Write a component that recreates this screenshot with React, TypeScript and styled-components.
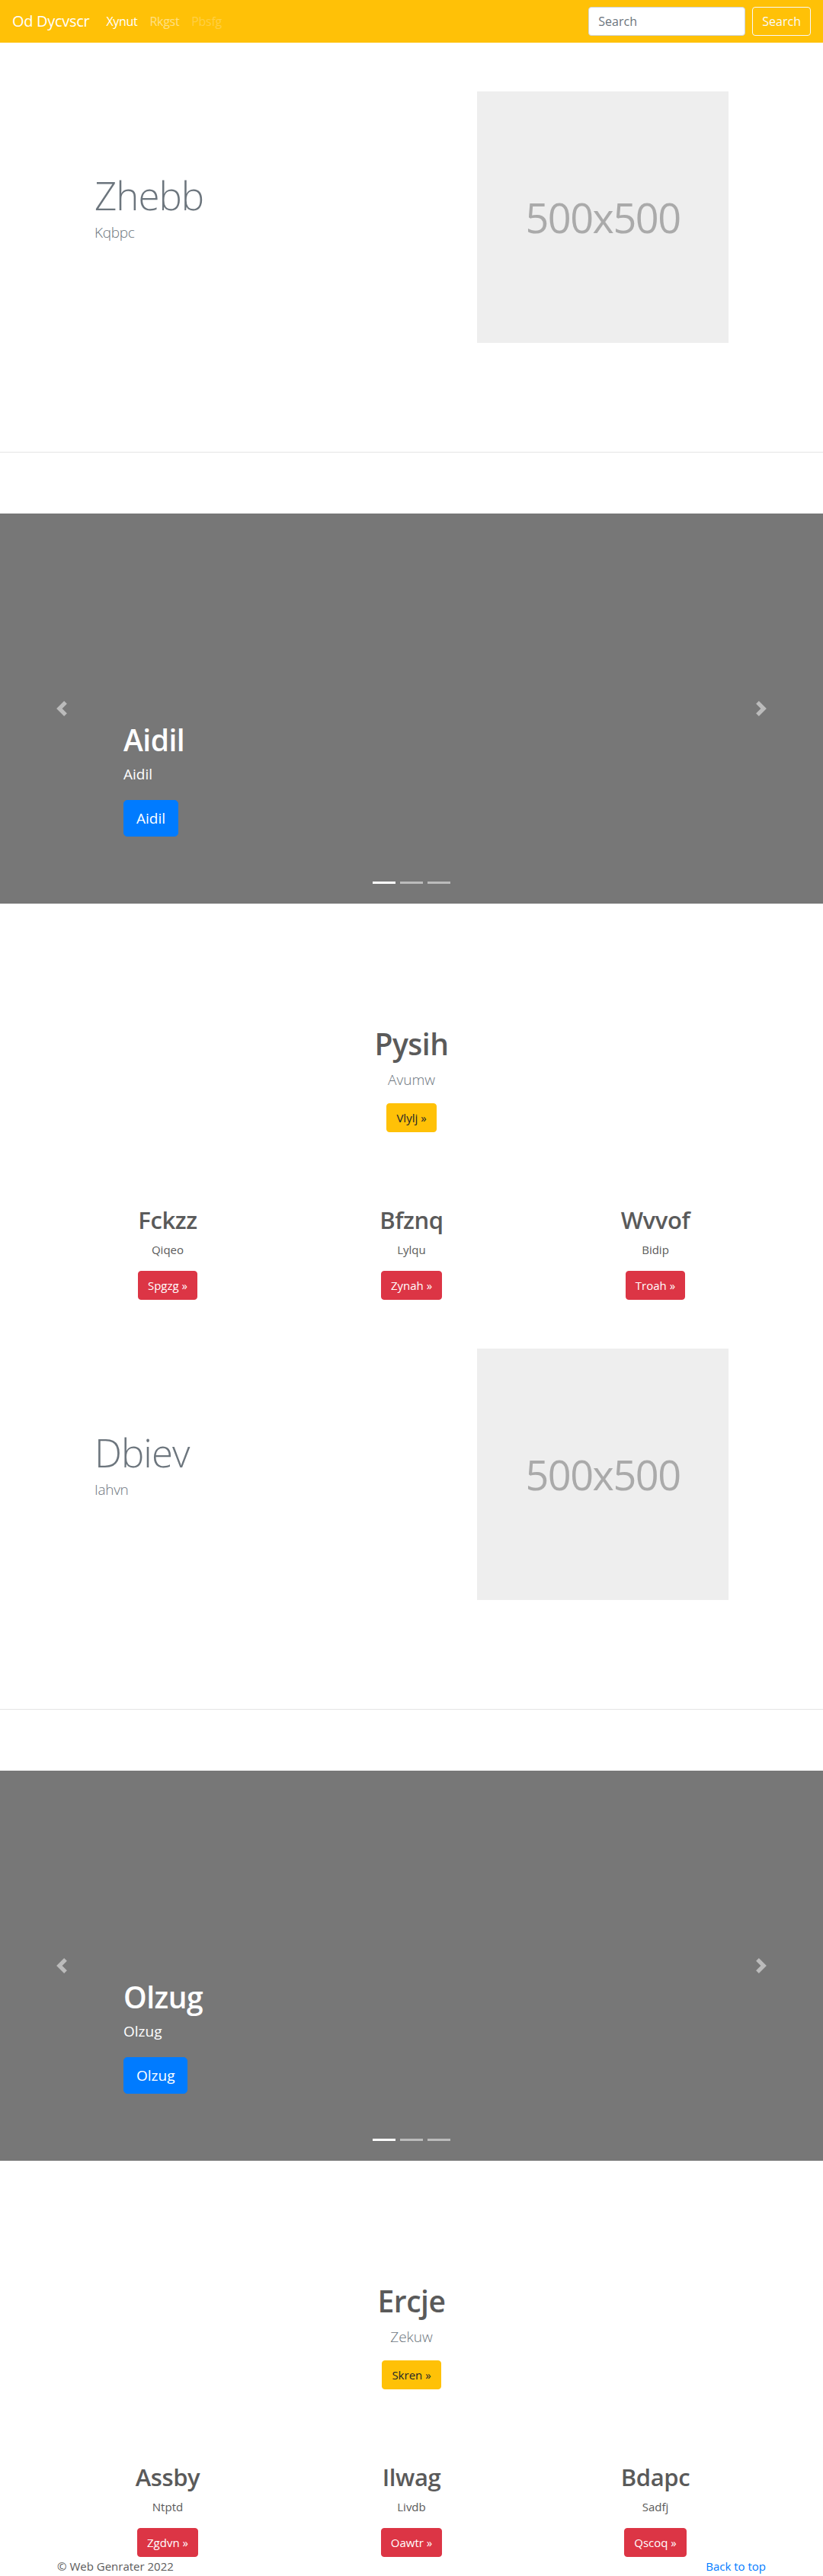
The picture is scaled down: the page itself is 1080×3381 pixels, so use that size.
import React from "react";
import styled, { createGlobalStyle } from "styled-components";

const GlobalStyle = createGlobalStyle`
  * { box-sizing: border-box; }
  html, body { margin: 0; padding: 0; }
  body {
    font-family: "Open Sans", "Liberation Sans", Arial, sans-serif;
    color: #5a5a5a;
    background: #fff;
    font-size: 16px;
    line-height: 1.5;
  }
`;

const Navbar = styled.header`
  display: flex;
  align-items: center;
  height: 56px;
  padding: 0 16px;
  background: #ffc107;
`;

const Brand = styled.a`
  font-size: 20px;
  line-height: 30px;
  color: #fff;
  margin-right: 14px;
  text-decoration: none;
  letter-spacing: -0.3px;
`;

const NavList = styled.nav`
  display: flex;
  align-items: center;
`;

type LinkState = "active" | "normal" | "disabled";

const NavLink = styled.a<{ $state: LinkState }>`
  padding: 8px;
  font-size: 16px;
  line-height: 24px;
  text-decoration: none;
  letter-spacing: -0.3px;
  color: ${(p) =>
    p.$state === "active"
      ? "#fff"
      : p.$state === "normal"
      ? "rgba(255,255,255,.5)"
      : "rgba(255,255,255,.25)"};
`;

const SearchForm = styled.form`
  margin-left: auto;
  display: flex;
  align-items: center;
  gap: 9px;
`;

const SearchInput = styled.input`
  width: 206px;
  height: 38px;
  padding: 6px 12px;
  font-family: inherit;
  font-size: 16px;
  color: #495057;
  background: #fff;
  border: 1px solid #ced4da;
  border-radius: 4px;
  outline: none;
  &::placeholder { color: #6c757d; }
`;

const OutlineButton = styled.button`
  height: 38px;
  padding: 6px 12px;
  font-family: inherit;
  font-size: 16px;
  line-height: 24px;
  color: #f8f9fa;
  background: transparent;
  border: 1px solid #f8f9fa;
  border-radius: 4px;
`;

const HeroSection = styled.section`
  padding: 64px 0 143px;
`;

const HeroGrid = styled.div`
  width: 960px;
  margin: 0 auto;
  padding: 0 64px;
  display: grid;
  grid-template-columns: 1fr 1fr;
  align-items: center;
`;

const HeroText = styled.div`
  padding-bottom: 4px;
`;

const HeroTitle = styled.h1`
  margin: 0;
  font-size: 51px;
  font-weight: 300;
  line-height: 64px;
  letter-spacing: -1px;
  color: #6c757d;
`;

const HeroLead = styled.p`
  margin: 2px 0 22px;
  font-size: 19px;
  font-weight: 300;
  line-height: 30px;
  letter-spacing: -0.3px;
  color: #6c757d;
`;

const Placeholder = styled.div`
  justify-self: end;
  width: 330px;
  height: 330px;
  background: #eee;
  color: #aaa;
  display: flex;
  align-items: center;
  justify-content: center;
  font-size: 54px;
  letter-spacing: -1.5px;
`;

const Divider = styled.hr`
  margin: 0;
  border: 0;
  border-top: 1px solid #e5e5e5;
`;

const Carousel = styled.div`
  position: relative;
  margin-top: 80px;
  height: 512px;
  background: #777;
  overflow: hidden;
`;

const Control = styled.span<{ $side: "left" | "right" }>`
  position: absolute;
  top: 0;
  bottom: 0;
  ${(p) => (p.$side === "left" ? "left: 0;" : "right: 0;")}
  width: 15%;
  display: flex;
  align-items: center;
  justify-content: center;
  opacity: 0.5;
`;

const Caption = styled.div`
  position: absolute;
  left: 15%;
  right: 15%;
  bottom: 48px;
  padding: 20px 0;
  color: #fff;
  text-align: left;
`;

const CaptionTitle = styled.h1`
  margin: 0 0 8px;
  font-size: 39px;
  font-weight: 600;
  line-height: 48px;
  letter-spacing: -0.5px;
`;

const CaptionText = styled.p`
  margin: 0 0 20px;
  font-size: 19px;
  line-height: 1.4;
`;

const CaptionAction = styled.p`
  margin: 0 0 20px;
`;

const ButtonBase = styled.a`
  display: inline-block;
  font-family: inherit;
  text-decoration: none;
  border: 1px solid transparent;
  text-align: center;
`;

const PrimaryLarge = styled(ButtonBase)`
  padding: 8px 16px;
  font-size: 19px;
  line-height: 30px;
  border-radius: 5px;
  background: #007bff;
  border-color: #007bff;
  color: #fff;
`;

const Indicators = styled.ol`
  position: absolute;
  left: 0;
  right: 0;
  bottom: 0;
  margin: 0 0 16px;
  padding: 0;
  list-style: none;
  display: flex;
  justify-content: center;
`;

const Indicator = styled.li<{ $active?: boolean }>`
  width: 30px;
  height: 3px;
  margin: 10px 3px;
  background: #fff;
  opacity: ${(p) => (p.$active ? 1 : 0.5)};
`;

const Marketing = styled.section`
  padding-top: 160px;
`;

const MarketingHeader = styled.div`
  text-align: center;
`;

const MarketingTitle = styled.h1`
  margin: 0 0 8px;
  font-size: 39px;
  font-weight: 600;
  line-height: 48px;
  letter-spacing: -0.5px;
  color: #5a5a5a;
`;

const MarketingLead = styled.p`
  margin: 0 0 16px;
  font-size: 19px;
  font-weight: 300;
  line-height: 30px;
  color: #6c757d;
`;

const SmallButton = styled(ButtonBase)<{ $variant: "warning" | "danger" }>`
  padding: 6px 12px;
  font-size: 15px;
  line-height: 24px;
  border-radius: 4px;
  background: ${(p) => (p.$variant === "warning" ? "#ffc107" : "#dc3545")};
  border-color: ${(p) => (p.$variant === "warning" ? "#ffc107" : "#dc3545")};
  color: ${(p) => (p.$variant === "warning" ? "#212529" : "#fff")};
`;

const Columns = styled.div`
  width: 960px;
  margin: 96px auto 0;
  display: grid;
  grid-template-columns: repeat(3, 1fr);
`;

const Column = styled.div`
  text-align: center;
`;

const ColumnTitle = styled.h2`
  margin: 0 0 8px;
  font-size: 31px;
  font-weight: 600;
  line-height: 38px;
  letter-spacing: -0.4px;
  color: #5a5a5a;
`;

const ColumnText = styled.p`
  margin: 0 0 16px;
  font-size: 15px;
  line-height: 24px;
`;

const Footer = styled.footer`
  width: 960px;
  margin: 0 auto;
  padding: 0 15px;
  display: flex;
  justify-content: space-between;
  font-size: 15px;
  line-height: 24px;
`;

const FooterText = styled.p`
  margin: 0;
  color: #5a5a5a;
`;

const BackLink = styled.a`
  color: #007bff;
  text-decoration: none;
`;

const ChevronLeft = () => (
  <svg width="20" height="20" viewBox="0 0 8 8" fill="#fff">
    <path d="M5.25 0l-4 4 4 4 1.5-1.5L4.25 4l2.5-2.5L5.25 0z" />
  </svg>
);

const ChevronRight = () => (
  <svg width="20" height="20" viewBox="0 0 8 8" fill="#fff">
    <path d="M2.75 0l-1.5 1.5L3.75 4l-2.5 2.5L2.75 8l4-4-4-4z" />
  </svg>
);

type Col = { title: string; text: string; button: string };

const Hero = ({ title, lead }: { title: string; lead: string }) => (
  <>
    <HeroSection>
      <HeroGrid>
        <HeroText>
          <HeroTitle>{title}</HeroTitle>
          <HeroLead>{lead}</HeroLead>
        </HeroText>
        <Placeholder>500x500</Placeholder>
      </HeroGrid>
    </HeroSection>
    <Divider />
  </>
);

const Slide = ({ label }: { label: string }) => (
  <Carousel>
    <Control $side="left">
      <ChevronLeft />
    </Control>
    <Control $side="right">
      <ChevronRight />
    </Control>
    <Caption>
      <CaptionTitle>{label}</CaptionTitle>
      <CaptionText>{label}</CaptionText>
      <CaptionAction>
        <PrimaryLarge href="#">{label}</PrimaryLarge>
      </CaptionAction>
    </Caption>
    <Indicators>
      <Indicator $active />
      <Indicator />
      <Indicator />
    </Indicators>
  </Carousel>
);

const MarketingBlock = ({
  title,
  lead,
  button,
  cols,
}: {
  title: string;
  lead: string;
  button: string;
  cols: Col[];
}) => (
  <Marketing>
    <MarketingHeader>
      <MarketingTitle>{title}</MarketingTitle>
      <MarketingLead>{lead}</MarketingLead>
      <SmallButton $variant="warning" href="#">
        {button} »
      </SmallButton>
    </MarketingHeader>
    <Columns>
      {cols.map((c) => (
        <Column key={c.title}>
          <ColumnTitle>{c.title}</ColumnTitle>
          <ColumnText>{c.text}</ColumnText>
          <SmallButton $variant="danger" href="#">
            {c.button} »
          </SmallButton>
        </Column>
      ))}
    </Columns>
  </Marketing>
);

export default function App() {
  return (
    <>
      <GlobalStyle />
      <Navbar>
        <Brand href="#">Od Dycvscr</Brand>
        <NavList>
          <NavLink $state="active" href="#">Xynut</NavLink>
          <NavLink $state="normal" href="#">Rkgst</NavLink>
          <NavLink $state="disabled" href="#">Pbsfg</NavLink>
        </NavList>
        <SearchForm onSubmit={(e) => e.preventDefault()}>
          <SearchInput placeholder="Search" aria-label="Search" />
          <OutlineButton type="submit">Search</OutlineButton>
        </SearchForm>
      </Navbar>

      <Hero title="Zhebb" lead="Kqbpc" />
      <Slide label="Aidil" />
      <MarketingBlock
        title="Pysih"
        lead="Avumw"
        button="Vlylj"
        cols={[
          { title: "Fckzz", text: "Qiqeo", button: "Spgzg" },
          { title: "Bfznq", text: "Lylqu", button: "Zynah" },
          { title: "Wvvof", text: "Bidip", button: "Troah" },
        ]}
      />

      <Hero title="Dbiev" lead="Iahvn" />
      <Slide label="Olzug" />
      <MarketingBlock
        title="Ercje"
        lead="Zekuw"
        button="Skren"
        cols={[
          { title: "Assby", text: "Ntptd", button: "Zgdvn" },
          { title: "Ilwag", text: "Livdb", button: "Oawtr" },
          { title: "Bdapc", text: "Sadfj", button: "Qscoq" },
        ]}
      />

      <Footer>
        <FooterText>© Web Genrater 2022</FooterText>
        <BackLink href="#">Back to top</BackLink>
      </Footer>
    </>
  );
}
